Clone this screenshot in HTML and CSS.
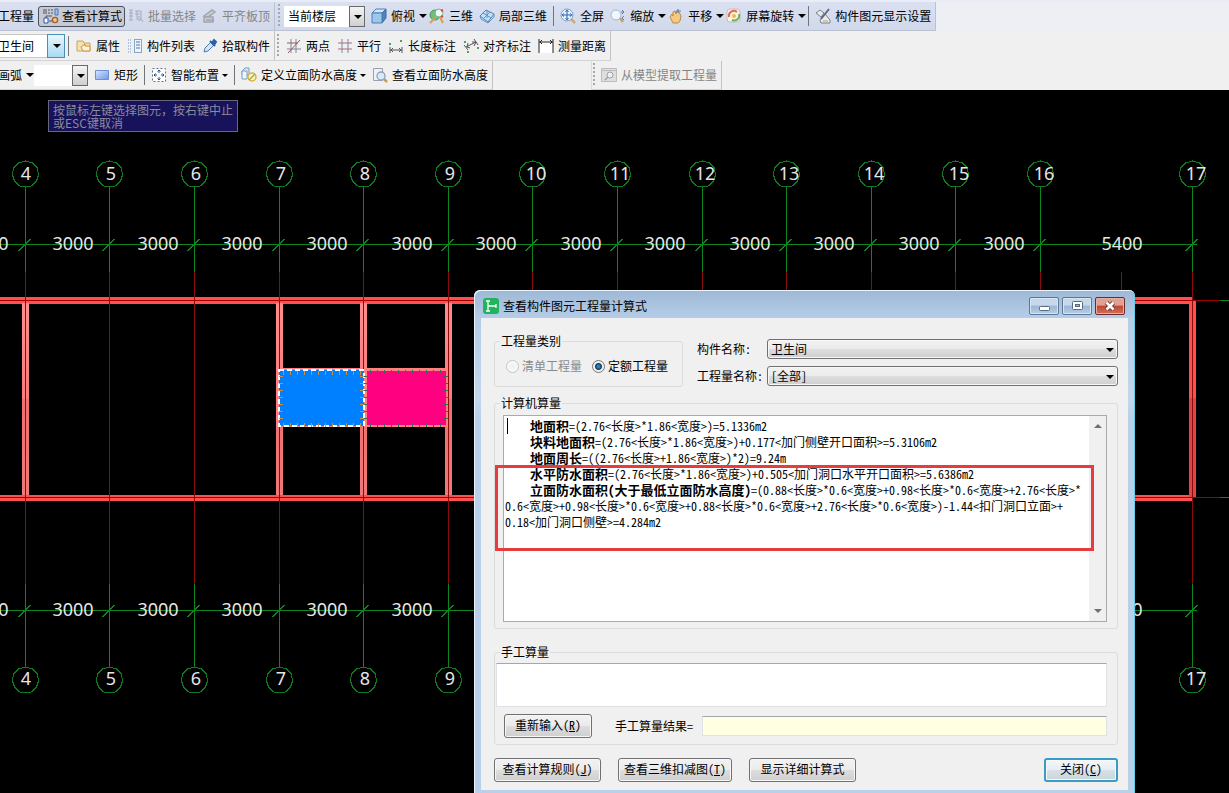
FILE: index.html
```
<!DOCTYPE html>
<html lang="zh-CN">
<head>
<meta charset="utf-8">
<title>查看构件图元工程量计算式</title>
<link rel="stylesheet" href="styles.css">
</head>
<body>
<div class="app">
<header class="toolbars">
  <div class="row row-main">
    <div class="bar bar-blue">
      <button class="tool cut">工程量</button>
      <button class="tool pressed"><svg class="ico" viewBox="0 0 16 16"><path d="M1 1v5M3 1v5M5 2h2M8 2h2M5 5h2M8 5h2" stroke="#555" fill="none"/><path d="M12 1h3v6h-3z" fill="#9fc1e8" stroke="#4b78b8"/><path d="M1 10h4v5H1z" fill="#fff" stroke="#2456b0"/><path d="M3 10V8h6M6 13h3" stroke="#555" fill="none"/><circle cx="12" cy="12" r="2.6" fill="#f3c48a" stroke="#a0602a" stroke-width="1.4"/></svg>查看计算式</button>
      <button class="tool off"><svg class="ico" viewBox="0 0 16 16"><path d="M1 2h4M1 5h4M1 8h4M1 12h4M3 2v10M7 3h6v8M7 6h5M9 3v9M11 8v5l2-2 2 3" stroke="#a7abb8" fill="none"/></svg>批量选择</button>
      <button class="tool off"><svg class="ico" viewBox="0 0 16 16"><path d="M2 8l8-6 3 2-7 5zM2 9h9v5H2zM4 12h8" stroke="#a2a5af" stroke-width="1.5" fill="#c9ccd4"/></svg>平齐板顶</button>
    </div>
    <div class="bar bar-blue">
      <i class="grip"></i>
      <span class="combo floor"><select aria-label="楼层范围"><option>当前楼层</option></select></span>
      <button class="tool"><svg class="ico" viewBox="0 0 16 16"><path d="M1 5l4-4h10l-4 4z" fill="#d4e8fb" stroke="#4d7fb5"/><path d="M11 5l4-4v9l-4 5z" fill="#4f83bd" stroke="#3b6da5"/><path d="M1 5h10v10H1z" fill="#9cc6ec" stroke="#4d7fb5"/></svg>俯视<i class="caret"></i></button>
      <button class="tool"><svg class="ico" viewBox="0 0 16 16"><circle cx="6" cy="7" r="5" fill="#6cc07c" stroke="#3d9a5a"/><circle cx="10" cy="5" r="4" fill="#eef6f4" stroke="#7bb08a"/><path d="M12 3l2-1M12 8l2 1" stroke="#d04a3a" stroke-width="2"/><path d="M7 9l-6 6M11 9l3 6" stroke="#e29b4c" stroke-width="2"/></svg>三维</button>
      <button class="tool"><svg class="ico" viewBox="0 0 16 16"><path d="M1 8l6-6 8 4-6 8z" fill="#c4e0f5" stroke="#4b83b9"/><path d="M4 5l8 5M5 10l6-6M8 2v8M1 8l1 3 7 4 6-6V6" fill="none" stroke="#5d94c4"/></svg>局部三维</button>
      <i class="sep"></i>
      <button class="tool"><svg class="ico" viewBox="0 0 16 16"><path d="M11 11l4 4" stroke="#d8a868" stroke-width="2.5"/><circle cx="7" cy="7" r="6" fill="#e2f0ff" stroke="#7b9dc8"/><path d="M7 2v10M2 7h10M5.500 4L7 2.200 8.500 4M5.500 10L7 11.800 8.500 10M4 5.500L2.200 7 4 8.500M10 5.500L11.800 7 10 8.500" fill="none" stroke="#2f65ad"/></svg>全屏</button>
      <button class="tool"><svg class="ico" viewBox="0 0 16 16"><path d="M10 10l3 4" stroke="#c9a06a" stroke-width="2.500"/><circle cx="6" cy="7" r="5" fill="#eef6ff" stroke="#a3b6d0"/><path d="M12 2l2 2-2 2M14 4h-3M14 8l-2 2 2 2" fill="none" stroke="#5e7ea8"/></svg>缩放<i class="caret"></i></button>
      <button class="tool"><svg class="ico" viewBox="0 0 16 16"><path d="M2 9l2-3 1 2V4l2-1 1 3 1-3 2 1 2 4-1 5-2 2H5z" fill="#f2ca84" stroke="#b98a48"/><path d="M10 1v4M8 3h5" stroke="#4f86c4" stroke-width="1.200"/></svg>平移<i class="caret"></i></button>
      <button class="tool"><svg class="ico" viewBox="0 0 16 16"><rect x="1" y="1" width="13" height="13" rx="3" fill="#fbf2e6" stroke="#cdbdb1"/><path d="M3 9a5 5 0 0 1 8-5" fill="none" stroke="#e46a5c" stroke-width="2"/><path d="M13 6a5 5 0 0 1-7 6" fill="none" stroke="#67b368" stroke-width="2"/><circle cx="8" cy="8" r="2" fill="#f4b64e"/></svg>屏幕旋转<i class="caret"></i></button>
      <i class="sep"></i>
      <button class="tool"><svg class="ico" viewBox="0 0 16 16"><path d="M1 5l4-3 4 3-3 4zM5 12l5-6 5 6v3H6z" fill="#e8eaee" stroke="#7c8088"/><path d="M14 1L6 11" stroke="#5e6a80" stroke-width="2"/><path d="M8 13h5" stroke="#d69c4b"/></svg>构件图元显示设置</button>
    </div>
  </div>
  <div class="row row-edit">
    <div class="bar">
      <span class="combo part"><select aria-label="构件"><option>卫生间</option></select></span>
      <i class="sep"></i>
      <button class="tool"><svg class="ico" viewBox="0 0 16 16"><path d="M1 3h6l1 2h6v8H1z" fill="#f7dfae" stroke="#c9a468"/><path d="M5 9l4-3v2h5v5H7z" fill="#fff4dc" stroke="#cf8f3a"/></svg>属性</button>
      <button class="tool"><svg class="ico" viewBox="0 0 16 16"><path d="M1 2h4M1 5h4M1 8h4M1 11h4M1 14h4" stroke="#7296c8" stroke-dasharray="1 1"/><rect x="7.500" y="1.500" width="7" height="13" fill="#eef4fb" stroke="#8aa5c7"/><path d="M9 4h4M9 7h4M9 10h4" stroke="#3e76ba"/></svg>构件列表</button>
      <button class="tool"><svg class="ico" viewBox="0 0 16 16"><path d="M2 14l1-4 6-6 3 3-6 6z" fill="#cfe5fb" stroke="#4f7fb6"/><path d="M8 3l5 5M10 5l2-3 2 2-2 3" fill="#3469ad" stroke="#2e5f9e" stroke-width="2"/></svg>拾取构件</button>
    </div>
    <div class="bar">
      <i class="grip"></i>
      <button class="tool"><svg class="ico" viewBox="0 0 16 16"><path d="M5 1v14M10 1v14M1 11h14" stroke="#7a86a2" fill="none"/><path d="M1 5h11M2 15L14 2" stroke="#9a5a5a"/></svg>两点</button>
      <button class="tool"><svg class="ico" viewBox="0 0 16 16"><path d="M5 1v14M11 1v14" stroke="#7289b2" fill="none"/><path d="M1 5h14M1 11h14" stroke="#b06a72"/></svg>平行</button>
      <button class="tool"><svg class="ico" viewBox="0 0 16 16"><path d="M2 9v6M14 9v6M2 12h12M5 10l-2 2 2 2M11 10l2 2-2 2" fill="none" stroke="#555"/><path d="M1 6h2M12 3h2" stroke="#4ba457" stroke-width="2"/></svg>长度标注</button>
      <button class="tool"><svg class="ico" viewBox="0 0 16 16"><path d="M3 9L13 4M1 7l4 5M11 1l4 6M5 5L4 9l3 1M9 4l4 0-2 4" fill="none" stroke="#555"/><path d="M1 4h2M4 14h2M14 10h2" stroke="#4ba457" stroke-width="2"/></svg>对齐标注</button>
      <button class="tool"><svg class="ico" viewBox="0 0 16 16"><path d="M1 3h14v12H1z" fill="#fff"/><path d="M1 1v14M15 1v14M1 4h14M4 2L2 4l2 2M12 2l2 2-2 2" fill="none" stroke="#222"/></svg>测量距离</button>
    </div>
  </div>
  <div class="row row-draw">
    <div class="bar">
      <button class="tool cut">画弧<i class="caret"></i></button>
      <span class="combo arc"><select aria-label="画弧方式"><option></option></select></span>
      <button class="tool"><svg class="ico" viewBox="0 0 16 16"><defs><linearGradient id="sky" x2="1" y2="1"><stop stop-color="#d8e6ff"/><stop offset="1" stop-color="#6f97e8"/></linearGradient></defs><path d="M1.500 3.500h13v9h-13z" fill="url(#sky)" stroke="#6d8fd6"/></svg>矩形</button>
      <i class="sep"></i>
      <button class="tool"><svg class="ico" viewBox="0 0 16 16"><path d="M1.500 1.500h13v13h-13z" fill="#fff" stroke="#5d7494" stroke-dasharray="2 2"/><path d="M8 3v3M8 10v3M3 8h3M10 8h3M6.500 4.500L8 3l1.500 1.500M6.500 11.500L8 13l1.500-1.500M4.500 6.500L3 8l1.500 1.500M11.500 6.500L13 8l-1.500 1.500" fill="none" stroke="#2d4c78"/></svg>智能布置<i class="caret small"></i></button>
      <i class="sep"></i>
      <button class="tool"><svg class="ico" viewBox="0 0 16 16"><path d="M1 4l3-3h4v7H1z" fill="#d5e6f8" stroke="#7a9cc6"/><path d="M1 4h5v8H1z" fill="#eef5fd" stroke="#7a9cc6"/><circle cx="11" cy="10" r="4" fill="#fff3b8" stroke="#dcb240" stroke-width="1.500"/><path d="M8 13l6-6" stroke="#8ab45a" stroke-width="1.500"/></svg>定义立面防水高度<i class="caret small"></i></button>
      <button class="tool"><svg class="ico" viewBox="0 0 16 16"><path d="M1.500 1.500h9v12h-9z" fill="#eef2f6" stroke="#98a0aa"/><path d="M12 12l3 3" stroke="#c99a5c" stroke-width="2.500"/><circle cx="9" cy="9" r="4" fill="#d7eafa" stroke="#8da2b8" stroke-width="1.300"/></svg>查看立面防水高度</button>
    </div>
    <div class="bar extract">
      <i class="grip"></i>
      <button class="tool off"><svg class="ico" viewBox="0 0 16 16"><path d="M.500 1.500h15v13H.500z" fill="#dedede" stroke="#bdbdbd"/><path d="M1 3.500h14" stroke="#bdbdbd"/><circle cx="9" cy="8" r="3" fill="#eee" stroke="#a2a2a2"/><path d="M7 10l-3 3" stroke="#a2a2a2" stroke-width="1.500"/></svg>从模型提取工程量</button>
    </div>
  </div>
</header>

<main class="canvas">
  <svg class="plan" aria-label="轴网平面图">
    <defs>
      <linearGradient id="wall" x2="0" y2="1"><stop stop-color="#ff8c8c"/><stop offset=".5" stop-color="#fb7c7c"/><stop offset=".5" stop-color="#f07070"/><stop offset="1" stop-color="#f07878"/></linearGradient>
      <g id="axis">
        <path class="red" d="M0 182v312"/>
        <path class="green" d="M0 97v85M0 494v83M-7 161L5 149M-7 527L5 515"/>
        <path class="bubble" d="M0 71l7 2 5 5 1 7-2 6-5 5-6 1-6-1-5-5-2-6 1-7 5-5zM0 577l7 2 5 5 1 7-2 6-5 5-6 1-6-1-5-5-2-6 1-7 5-5z"/>
      </g>
    </defs>
    <g class="outer">
      <path d="M0 207h1192v7H0zM0 405h1192v6H0z"/>
      <path d="M1189 211h7v97h-7z"/><path class="dim" d="M1189 308h7v99h-7z"/>
    </g>
    <g fill="url(#wall)">
      <rect x="22" y="213" width="7" height="192"/><rect x="276" y="213" width="7" height="192"/><rect x="360" y="213" width="7" height="192"/><rect x="445" y="213" width="7" height="192"/>
    </g>
    <path d="M276 278h172v59H276z" fill="#ff8080"/>
    <path class="dark" d="M0 210.500h1220M0 407.500h1220"/>
    <path class="green" d="M1220 210.500h40M1220 407.500h40M0 154.500h1197M0 520.500h1197"/>
    <path class="red" d="M1121.500 182v60"/>
    <use href="#axis" x="25.500"/><use href="#axis" x="109.500"/><use href="#axis" x="194.500"/><use href="#axis" x="279.500"/><use href="#axis" x="363.500"/><use href="#axis" x="448.500"/><use href="#axis" x="532.500"/><use href="#axis" x="617.500"/><use href="#axis" x="702.500"/><use href="#axis" x="786.500"/><use href="#axis" x="871.500"/><use href="#axis" x="955.500"/><use href="#axis" x="1040.500"/><use href="#axis" x="1192.500"/>
    <path d="M279 280h85v56h-85z" fill="#0080ff"/>
    <path d="M367 281h79v54h-79z" fill="#ff0080"/>
    <path d="M279 280h85v56h-85z" class="select-line"/>
    <path d="M283 282.500h79M283 334.500h79M281 286v46M362 286v46" class="hatch-orange"/>
    <path d="M370 281.500h75M370 334.500h75M366 286v46M446 286v46" class="hatch-green"/>
    <g class="num">
      <text x="26" y="90">4</text><text x="111" y="90">5</text><text x="196" y="90">6</text><text x="281" y="90">7</text><text x="365" y="90">8</text><text x="450" y="90">9</text><text x="536" y="90">10</text><text x="620" y="90">11</text><text x="705" y="90">12</text><text x="789" y="90">13</text><text x="874" y="90">14</text><text x="959" y="90">15</text><text x="1044" y="90">16</text><text x="1196" y="90">17</text>
      <text x="26" y="595">4</text><text x="111" y="595">5</text><text x="196" y="595">6</text><text x="281" y="595">7</text><text x="365" y="595">8</text><text x="450" y="595">9</text><text x="1196" y="595">17</text>
      <text x="-12" y="160">3000</text><text x="73" y="160">3000</text><text x="158" y="160">3000</text><text x="242" y="160">3000</text><text x="327" y="160">3000</text><text x="412" y="160">3000</text><text x="496" y="160">3000</text><text x="581" y="160">3000</text><text x="665" y="160">3000</text><text x="750" y="160">3000</text><text x="834" y="160">3000</text><text x="919" y="160">3000</text><text x="1004" y="160">3000</text><text x="1122" y="160">5400</text>
      <text x="-12" y="526">3000</text><text x="73" y="526">3000</text><text x="158" y="526">3000</text><text x="242" y="526">3000</text><text x="327" y="526">3000</text><text x="412" y="526">3000</text><text x="1122" y="526">5400</text>
    </g>
  </svg>

  <p class="hint">按鼠标左键选择图元，按右键中止<br>或ESC键取消</p>

  <section class="dialog" role="dialog" aria-labelledby="dlg-title">
    <div class="titlebar">
      <svg class="logo" viewBox="0 0 16 16"><rect width="16" height="16" rx="3" fill="#22b35e"/><path d="M3 3h4M5 3v10M3 13h4M5 8h8M13 6v4" fill="none" stroke="#fff" stroke-width="1.300"/></svg>
      <h1 id="dlg-title">查看构件图元工程量计算式</h1>
      <button class="win" aria-label="最小化"><svg viewBox="0 0 28 16"><rect x="9.500" y="8.500" width="10" height="4" rx="1" fill="#fff" stroke="#596980"/></svg></button>
      <button class="win" aria-label="最大化"><svg viewBox="0 0 28 16"><rect x="9.500" y="3.500" width="10" height="8" rx="1" fill="#fff" stroke="#596980"/><rect x="12.500" y="6.500" width="4" height="2" fill="#9db6d2" stroke="#596980"/></svg></button>
      <button class="win close" aria-label="关闭窗口"><svg viewBox="0 0 28 16"><path d="M10.500 4.500l7 7M17.500 4.500l-7 7" stroke="#6b3434" stroke-width="4.500"/><path d="M10.500 4.500l7 7M17.500 4.500l-7 7" stroke="#fff" stroke-width="2.600"/></svg></button>
    </div>
    <form class="client">
      <div class="top">
        <fieldset>
          <legend>工程量类别</legend>
          <div class="kind">
            <label class="off"><input type="radio" name="kind" disabled>清单工程量</label>
            <label><input type="radio" name="kind" checked>定额工程量</label>
          </div>
        </fieldset>
        <div class="picks">
          <label for="comp">构件名称:</label>
          <span class="drop"><select id="comp"><option>卫生间</option></select></span>
          <label for="qty">工程量名称:</label>
          <span class="drop"><select id="qty"><option>[全部]</option></select></span>
        </div>
      </div>
      <fieldset class="auto">
        <legend>计算机算量</legend>
        <div class="memo">
          <div class="lines">
            <p class="item"><b>地面积</b>=(2.76&lt;长度&gt;*1.86&lt;宽度&gt;)=5.1336m2</p>
            <p class="item"><b>块料地面积</b>=(2.76&lt;长度&gt;*1.86&lt;宽度&gt;)+0.177&lt;加门侧壁开口面积&gt;=5.3106m2</p>
            <p class="item"><b>地面周长</b>=((2.76&lt;长度&gt;+1.86&lt;宽度&gt;)*2)=9.24m</p>
            <p class="item"><b>水平防水面积</b>=(2.76&lt;长度&gt;*1.86&lt;宽度&gt;)+0.505&lt;加门洞口水平开口面积&gt;=5.6386m2</p>
            <p class="item"><b>立面防水面积(大于最低立面防水高度)</b>=(0.88&lt;长度&gt;*0.6&lt;宽度&gt;+0.98&lt;长度&gt;*0.6&lt;宽度&gt;+2.76&lt;长度&gt;*<br>0.6&lt;宽度&gt;+0.98&lt;长度&gt;*0.6&lt;宽度&gt;+0.88&lt;长度&gt;*0.6&lt;宽度&gt;+2.76&lt;长度&gt;*0.6&lt;宽度&gt;)-1.44&lt;扣门洞口立面&gt;+<br>0.18&lt;加门洞口侧壁&gt;=4.284m2</p>
          </div>
          <div class="scroll"><i class="up"></i><i class="down"></i></div>
          <i class="cursor"></i>
          <i class="mark"></i>
        </div>
      </fieldset>
      <fieldset class="manual">
        <legend>手工算量</legend>
        <div class="entry">
          <textarea aria-label="手工算量"></textarea>
          <div class="result">
            <button type="button" class="btn">重新输入(<u>R</u>)</button>
            <label for="res">手工算量结果=</label>
            <input id="res" type="text">
          </div>
        </div>
      </fieldset>
      <div class="actions">
        <button type="button" class="btn">查看计算规则(<u>J</u>)</button>
        <button type="button" class="btn">查看三维扣减图(<u>T</u>)</button>
        <button type="button" class="btn">显示详细计算式</button>
        <button type="button" class="btn primary">关闭(<u>C</u>)</button>
      </div>
    </form>
  </section>
</main>
</div>
</body>
</html>
```
FILE: styles.css
```
* { box-sizing: border-box; }
body {
  margin: 0;
  font: 12px/16px "Noto Sans CJK SC", sans-serif;
  color: #000;
  background: #000;
}
button, select, input, textarea { font: inherit; color: inherit; }
p, h1 { margin: 0; font-weight: normal; }
.app { display: flex; flex-direction: column; height: 100vh; overflow: hidden; }

/* Toolbars */
.toolbars { background: #f0f0f0; overflow: hidden; flex: none; }
.row { display: flex; height: 30px; white-space: nowrap; }
.row-main { height: 31px; background: #eeeff4; border-top: 2px solid #e9edf7; }
.row-draw { height: 29px; }
.bar {
  display: flex;
  align-items: center;
  gap: 7px;
  padding-right: 4px;
  border-right: 1px solid #c4c4c4;
  border-bottom: 1px solid #d4d4d4;
}
.bar-blue { background: linear-gradient(#dbe1f1, #d0d8ea); border-color: #b9c1d3; }
.bar-blue, .row-draw .bar { gap: 6px; }
.tool {
  display: flex;
  align-items: center;
  gap: 4px;
  flex: none;
  margin: 0;
  padding: 0;
  border: 0;
  background: none;
}
.tool.cut { margin-left: -2px; }
.tool.off { color: #858585; }
.tool.pressed {
  height: 21px;
  padding: 0 2px 0 4px;
  gap: 3px;
  margin: 0 -3px 0 -2px;
  border: 1px solid #4a4f5c;
  border-radius: 3px;
  background: #c6cad6;
}
.ico { width: 16px; height: 16px; flex: none; }
.caret { border: 4px solid transparent; border-top-color: #000; border-bottom: 0; margin-right: -4px; }
.caret.small { border-width: 3px 3px 0; margin: 0 0 0 -1px; }
.sep { width: 1px; height: 20px; background: #70747c; }
.grip {
  width: 2px;
  height: 24px;
  margin-left: 3px;
  background: repeating-linear-gradient(#a4a8b2 0 2px, transparent 2px 4px);
}
.row-edit .grip { margin-left: 2px; }
.combo { position: relative; display: flex; flex: none; }
.combo select {
  width: 100%;
  height: 21px;
  border: 0;
  border-radius: 0;
  padding: 0 4px;
  background: #fff;
  appearance: none;
}
.combo::before {
  content: "";
  position: absolute;
  inset: 0 0 0 auto;
  width: 14px;
  border: 1px solid #6a6a6a;
  background: linear-gradient(#f4f4f4, #cfcfcf);
}
.combo::after {
  content: "";
  position: absolute;
  right: 3px;
  top: 9px;
  border: 4px solid transparent;
  border-top-color: #000;
  border-bottom: 0;
}
.combo.floor { width: 81px; margin-left: -2px; }
.combo.part { width: 65px; margin-right: -4px; }
.combo.part select { height: 24px; padding: 0; text-indent: -2px; border: 1px solid #c8c8c8; border-left: 0; }
.combo.part::before { width: 16px; border-color: #4b8fb5; background: linear-gradient(#e8f6fd, #a9daf2); }
.combo.part::after { right: 4px; top: 10px; }
.combo.arc { width: 54px; margin-left: -2px; }
.extract { margin-left: 98px; border-left: 1px solid #dcdcdc; }
.extract .grip { margin-left: 1px; }

/* Drawing area */
.canvas { position: relative; flex: 1; min-height: 0; background: #000; overflow: hidden; }
.plan { display: block; width: 100%; height: 100%; shape-rendering: crispEdges; }
.plan .outer { fill: #ff5050; }
.plan .outer .dim { fill: #e04444; }
.plan .dark { stroke: #a00000; }
.plan .red { stroke: #8c0c0c; fill: none; }
.plan .green { stroke: #0c8420; fill: none; }
.plan .bubble { stroke: #0f7a22; fill: none; }
.select-line { fill: none; stroke: #fff; stroke-width: 2; stroke-dasharray: 5 3; }
.hatch-orange { stroke: #c89048; stroke-width: 4; stroke-dasharray: 1 6; }
.hatch-green { stroke: #3c6a50; stroke-width: 4; stroke-dasharray: 1 6; }
.num text { font: 18px "Noto Sans", sans-serif; fill: #e6e6e6; text-anchor: middle; }
.hint {
  position: absolute;
  left: 48px;
  top: 10px;
  padding: 2px 4px;
  line-height: 13px;
  color: #8b8b9c;
  background: #17125a;
  border: 1px solid #66667c;
}

/* Dialog window */
.dialog {
  position: absolute;
  left: 474px;
  top: 200px;
  width: 661px;
  padding: 0 7px 4px;
  border-radius: 6px 6px 0 0;
  background: linear-gradient(#9db8d6, #b5cde7 28px, #c3d6ec 110px, #b8d0ea 130px);
  box-shadow: inset 1px 1px #eaf4fc, inset -1px 0 #62cfe6;
  font-family: "Noto Sans Mono CJK SC", "Noto Sans CJK SC", monospace;
}
.titlebar { display: flex; align-items: center; gap: 3px; height: 28px; padding: 4px 3px 0 2px; }
.titlebar h1 { flex: 1; font: 12px/16px "Noto Sans CJK SC", sans-serif; padding-left: 1px; }
.logo { width: 16px; height: 16px; }
.win {
  width: 30px;
  height: 18px;
  padding: 0;
  border: 1px solid #5d7896;
  border-radius: 2px;
  background: linear-gradient(#c6d8ec 45%, #9bb6d3 50%, #b6cee6);
  box-shadow: inset 0 0 0 1px #d6e4f2;
}
.win svg { display: block; width: 28px; height: 16px; }
.win.close { border-color: #6e2a2a; background: linear-gradient(#e0a094 45%, #c04630 50%, #d0705a); box-shadow: inset 0 0 0 1px #e8b0a4; }
.client { padding: 16px 10px 8px 13px; background: #f0f0f0; }
fieldset { margin: 0; padding: 0; border: 1px solid #dcdcdc; border-radius: 3px; min-width: 0; }
legend { margin-left: 5px; padding: 0 1px; line-height: 14px; }
.top { display: flex; justify-content: space-between; margin-bottom: 9px; }
.kind { display: flex; gap: 10px; height: 38px; padding: 9px 14px 0 11px; }
.kind label { display: flex; align-items: center; height: 18px; gap: 3px; }
.kind input { margin: 0; width: 13px; height: 13px; appearance: none; border: 1px solid #8a8f94; border-radius: 50%; background: radial-gradient(#eee, #fff); }
.kind input:checked { background: radial-gradient(circle, #2b86b8 0 1px, #123c66 3px, #f2f2f2 4px); border-color: #777; }
.kind input:disabled { border-color: #c4c4c4; }
.kind .off { color: #8a8a8a; }
.picks { display: grid; grid-template-columns: 70px 351px; gap: 7px 0; align-content: start; align-items: center; padding-top: 5px; }
.drop { position: relative; display: block; }
.drop select, .btn {
  border: 1px solid #707070;
  border-radius: 3px;
  background: linear-gradient(#f2f2f2, #ebebeb 48%, #dddddd 52%, #cfcfcf);
  box-shadow: inset 0 0 0 1px #f8f8f8;
}
.drop select { display: block; width: 100%; height: 20px; padding: 0 3px; appearance: none; }
.drop::after { content: ""; position: absolute; right: 4px; top: 9px; border: 4px solid transparent; border-top-color: #000; border-bottom: 0; }
.auto { padding: 5px 0 6px; margin-bottom: 16px; }
.memo { position: relative; display: flex; height: 207px; margin: 0 10px 0 8px; border: 1px solid #a8abb0; background: #fff; }
.lines { flex: 1; padding: 2px 0 0 1px; white-space: nowrap; min-width: 0; }
.item { text-indent: 25px; }
.item b { font-size: 13px; line-height: 16px; }
.scroll { display: flex; flex-direction: column; justify-content: space-between; align-items: center; width: 17px; padding: 8px 0; background: #f0f0f0; }
.up { border: 4px solid transparent; border-top: 0; border-bottom-color: #707070; }
.down { border: 4px solid transparent; border-bottom: 0; border-top-color: #707070; }
.cursor { position: absolute; left: 3px; top: 2px; width: 1px; height: 16px; background: #000; }
.mark { position: absolute; left: -9px; top: 49px; width: 599px; height: 86px; border: 3px solid #e63b3f; }
.manual { margin-bottom: 13px; }
.entry { padding: 4px 10px 6px 1px; }
.entry textarea { display: block; width: 100%; height: 44px; resize: none; background: #fff; border: 1px solid #dfe1e6; border-top-color: #a4a7ad; }
.result { display: flex; align-items: center; gap: 9px; margin-top: 7px; padding-left: 8px; }
.result .btn { width: 88px; margin-right: 14px; }
.result input { flex: 1; min-width: 0; height: 20px; border: 1px solid #dfe1e6; border-top-color: #a4a7ad; background: #ffffe1; }
.btn { height: 24px; padding: 0 0 2px; }
.actions { display: flex; gap: 17px; }
.actions .btn { width: 107px; }
.actions .btn:nth-child(2) { width: 114px; }
.actions .btn.primary { width: 74px; margin-left: auto; border: 2px solid #3a9cc4; background: linear-gradient(#f2f6f8, #e6eef2 48%, #d6e0e6 52%, #c9d6dc); }
```
